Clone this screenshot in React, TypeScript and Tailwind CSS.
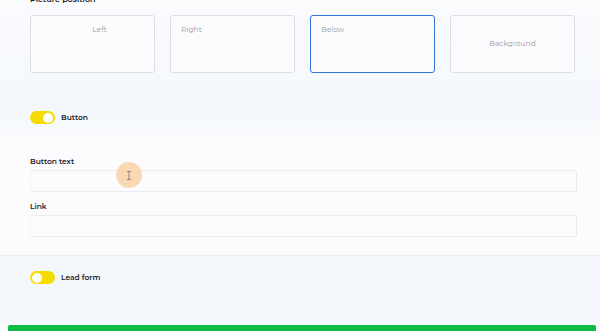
import React from 'react'

const font = { fontFamily: 'Montserrat, Lato, "Noto Sans", sans-serif' }

function Toggle({ on, label }: { on: boolean; label: string }) {
  return (
    <div className="flex items-center gap-[6px]">
      <div
        className={`flex h-[13px] w-[25px] items-center rounded-full bg-[#f4dc00] px-[2px] ${
          on ? 'justify-end' : 'justify-start'
        }`}
      >
        <div className="h-[10px] w-[10px] rounded-full bg-white" />
      </div>
      <span className="text-[7.5px] font-semibold text-[#222]">{label}</span>
    </div>
  )
}

const positions = [
  { name: 'Left', cls: 'items-start justify-center pl-[14px] pt-[8px]' },
  { name: 'Right', cls: 'items-start justify-start pl-[10px] pt-[8px]' },
  { name: 'Below', cls: 'items-start justify-start pl-[10px] pt-[8px]', active: true },
  { name: 'Background', cls: 'items-center justify-center' },
]

export default function App() {
  return (
    <div className="relative h-[331px] w-[600px] overflow-hidden bg-[#fbfbfd]" style={font}>
      {/* Picture position */}
      <div className="flex h-[90px] flex-col bg-gradient-to-b from-[#fafbfd] to-[#f5f8fc] pl-[30px] pr-[20px]">
        <p className="-mt-[7px] text-[8px] font-semibold leading-[12px] text-[#222]">Picture position</p>
        <div className="mt-[10px] flex gap-[15px]">
          {positions.map((p) => (
            <div
              key={p.name}
              className={`flex h-[58px] w-[125px] shrink-0 rounded-[3px] bg-[#fcfcfe] text-[7.5px] text-[#9a9a9a] ${p.cls} ${
                p.active ? 'border-[1.5px] border-[#2f74d0]' : 'border border-[#dcdde6]'
              }`}
            >
              {p.name}
            </div>
          ))}
        </div>
      </div>

      {/* Button toggle */}
      <div className="h-[50px] bg-gradient-to-b from-[#f3f7fb] via-[#f4f8fc] to-[#fbfbfd] px-[30px] pt-[21px]">
        <Toggle on label="Button" />
      </div>

      {/* Button fields */}
      <div className="flex h-[116px] flex-col border-b border-[#eeeaf0] bg-[#fcfbfe] pl-[30px] pr-[23px] pt-[16px]">
        <p className="text-[7.5px] font-semibold leading-[12px] text-[#222]">Button text</p>
        <div className="mt-[2px] h-[22px] rounded-[2px] border border-[#ebebee] border-l-[#f3f3f5]" />
        <p className="mt-[9px] text-[7.5px] font-semibold leading-[12px] text-[#222]">Link</p>
        <div className="mt-[2px] h-[22px] rounded-[2px] border border-[#ebebee] border-l-[#f3f3f5]" />
      </div>

      {/* Lead form */}
      <div className="h-[67px] bg-[#f4f7fb] px-[30px] pt-[15px]">
        <Toggle on={false} label="Lead form" />
      </div>

      <div className="ml-[8px] mr-[4px] mt-[2px] h-[10px] rounded-t-[2px] bg-[#0cbc45]" />

      {/* cursor highlight */}
      <div className="absolute left-[116px] top-[162px] flex h-[26px] w-[26px] items-center justify-center rounded-full bg-[#fbd8b4]">
        <svg width="6" height="9" viewBox="0 0 6 9" fill="none" stroke="#8a7a6e" strokeWidth="0.9">
          <path d="M1 0.5h4M1 8.5h4M3 0.5v8" />
        </svg>
      </div>
    </div>
  )
}
